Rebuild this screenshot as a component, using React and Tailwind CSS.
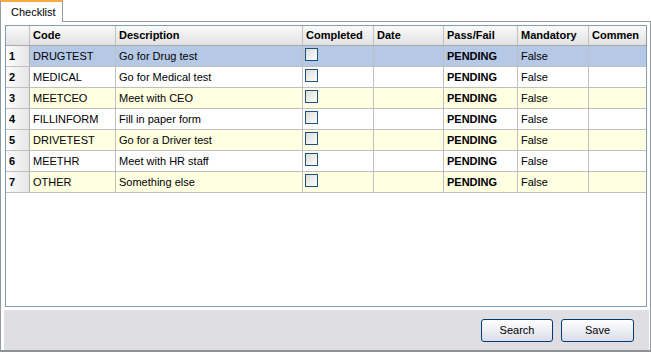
const columns = [
  { key: 'code', label: 'Code', w: 'w-[86px]' },
  { key: 'desc', label: 'Description', w: 'w-[187px]' },
  { key: 'done', label: 'Completed', w: 'w-[71px]' },
  { key: 'date', label: 'Date', w: 'w-[70px]' },
  { key: 'pass', label: 'Pass/Fail', w: 'w-[74px]' },
  { key: 'mand', label: 'Mandatory', w: 'w-[71px]' },
  { key: 'comm', label: 'Commen', w: 'w-[57px]' },
]

const rows = [
  { code: 'DRUGTEST', desc: 'Go for Drug test' },
  { code: 'MEDICAL', desc: 'Go for Medical test' },
  { code: 'MEETCEO', desc: 'Meet with CEO' },
  { code: 'FILLINFORM', desc: 'Fill in paper form' },
  { code: 'DRIVETEST', desc: 'Go for a Driver test' },
  { code: 'MEETHR', desc: 'Meet with HR staff' },
  { code: 'OTHER', desc: 'Something else' },
]

function Checkbox() {
  return (
    <div className="ml-[2px] mt-[2px] h-[13px] w-[13px] border border-[#1c5180] bg-gradient-to-br from-[#dcdcd7] to-white" />
  )
}

function Button({ children, w }) {
  return (
    <button
      className={`${w} flex h-[23px] items-center justify-center rounded-[3px] border border-[#003c74] bg-gradient-to-b from-white to-[#dcdcea] text-[11px] text-black`}
    >
      {children}
    </button>
  )
}

export default function App() {
  return (
    <div
      className="h-[353px] w-[651px] overflow-hidden bg-white text-[11px] text-black"
      style={{ fontFamily: '"Liberation Sans", Arial, sans-serif' }}
    >
      <div className="flex h-[21px] items-end">
        <div className="relative z-10 -mb-px flex h-[22px] w-[63px] items-center border-x border-t-2 border-x-[#919b9c] border-t-[#f8a940] bg-white pl-[10px] text-[11px]">
          Checklist
        </div>
      </div>
      <div className="flex h-[331px] w-[651px] flex-col border border-[#919b9c] border-b-2 border-b-[#8d9395] bg-white">
        <div className="ml-[4px] mr-[3px] mt-[3px] h-[282px] border border-[#7f9db9] bg-white">
          <div className="flex h-[20px] border-b border-[#a8a8a8] bg-gradient-to-b from-[#fafafa] to-[#e2e2e2] font-bold">
            <div className="w-[24px] border-r border-[#c0c0c0]" />
            {columns.map((c) => (
              <div
                key={c.key}
                className={`${c.w} flex items-center overflow-hidden whitespace-nowrap border-r border-[#c0c0c0] pl-[3px] last:border-r-0`}
              >
                {c.label}
              </div>
            ))}
          </div>
          {rows.map((r, i) => {
            const bg = i === 0 ? 'bg-[#b5c9e7]' : i % 2 === 0 ? 'bg-[#ffffe1]' : 'bg-white'
            return (
              <div key={r.code} className={`flex h-[21px] border-b border-[#c0c0c0] ${bg}`}>
                <div className="flex w-[24px] items-center border-r border-[#b0b0b0] bg-gradient-to-r from-[#fdfdfd] to-[#e6e6e6] pl-[3px] font-bold">
                  {i + 1}
                </div>
                <div className="flex w-[86px] items-center border-r border-[#c0c0c0] pl-[3px]">{r.code}</div>
                <div className="flex w-[187px] items-center border-r border-[#c0c0c0] pl-[3px]">{r.desc}</div>
                <div className="w-[71px] border-r border-[#c0c0c0]">
                  <Checkbox />
                </div>
                <div className="w-[70px] border-r border-[#c0c0c0]" />
                <div className="flex w-[74px] items-center border-r border-[#c0c0c0] pl-[3px] font-bold">PENDING</div>
                <div className="flex w-[71px] items-center border-r border-[#c0c0c0] pl-[3px]">False</div>
                <div className="w-[57px]" />
              </div>
            )
          })}
        </div>
        <div className="ml-[3px] mr-[1px] mt-[3px] flex flex-1 items-center justify-end gap-[8px] bg-[#dfdfe3] pr-[15px]">
          <Button w="w-[72px]">Search</Button>
          <Button w="w-[73px]">Save</Button>
        </div>
      </div>
    </div>
  )
}
